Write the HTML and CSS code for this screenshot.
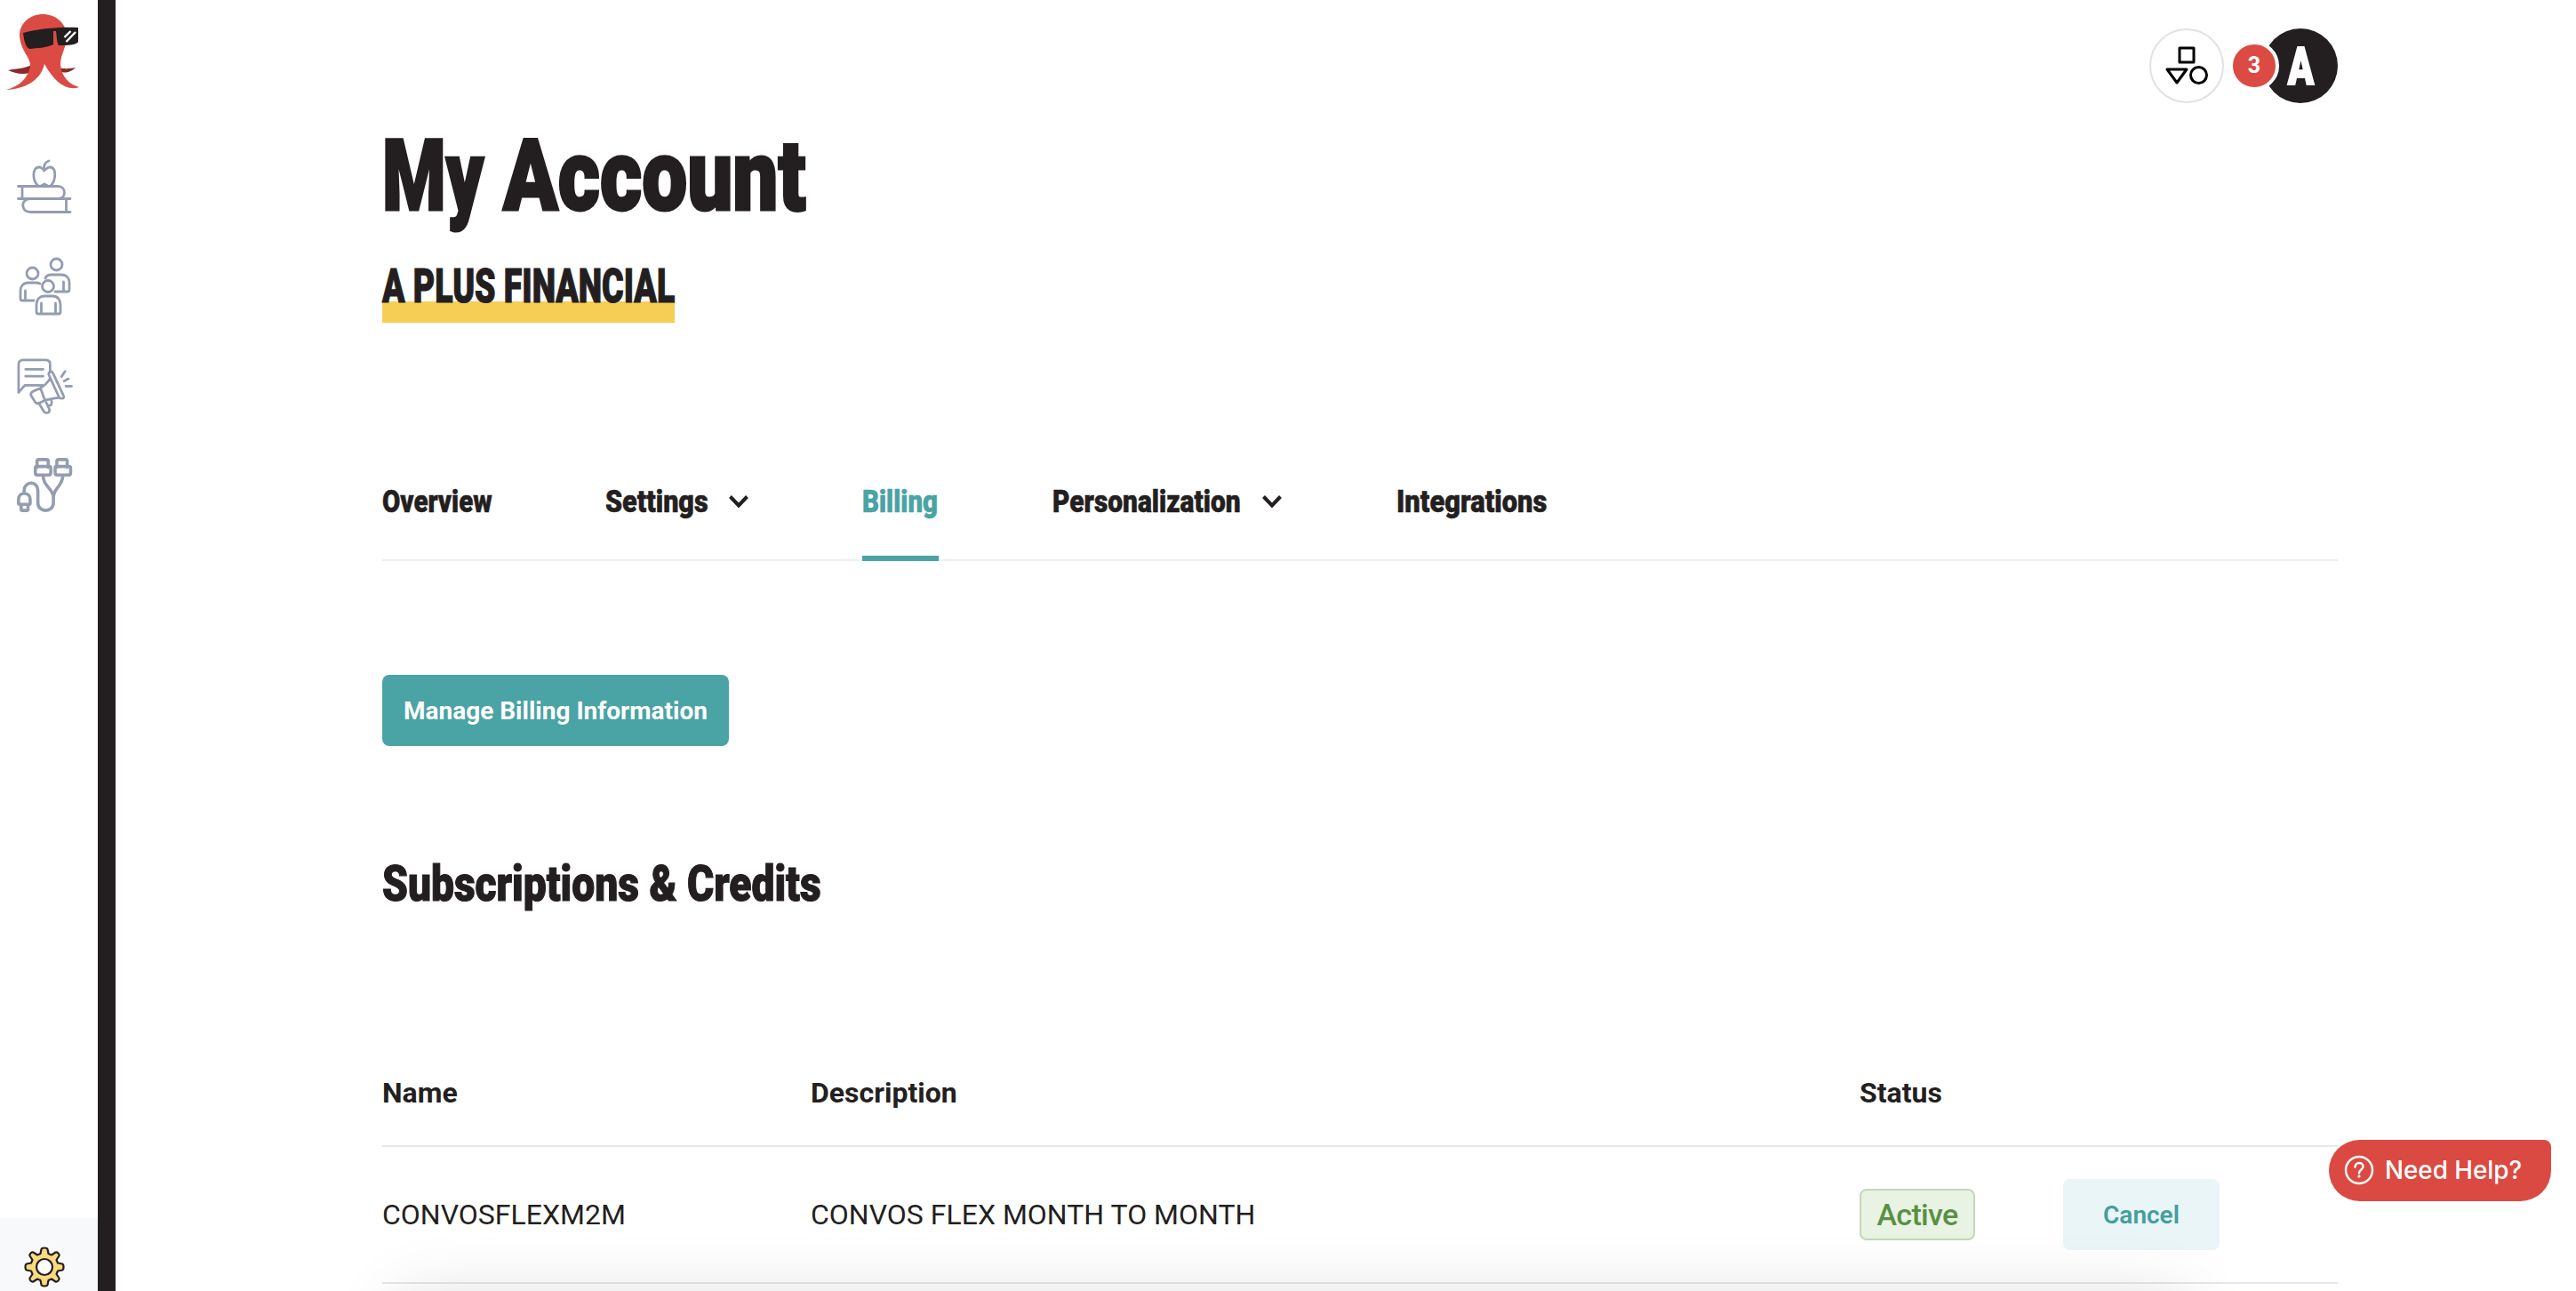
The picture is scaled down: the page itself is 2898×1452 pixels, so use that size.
FILE: index.html
```html
<!DOCTYPE html>
<html lang="en">
<head>
<meta charset="utf-8">
<title>My Account</title>
<link rel="stylesheet" href="styles.css">
</head>
<body>
<div class="app">
  <aside class="sidebar">
    <a class="logo" href="#">
      <svg width="84" height="88" viewBox="0 0 84 88">
        <path fill="#8b2a29" d="M2 63C12 61 22 61 30 56L32 64C22 69 10 67 2 63ZM59 60C66 62 72 61 78 60C72 66 66 66 61 65Z"/>
        <path fill="#db4b43" d="M41 0C56 0 67 10 68 23C69 36 61 44 61 57C62 70 71 79 82 82C68 87 54 76 43 56C39 74 22 84 0 85C15 81 24 72 27 59C28 48 16 42 15 24C15 10 27 0 41 0Z"/>
        <path fill="#231f20" d="M19 21C37 16 60 14 81 15L81 31C79 35 68 35 59 35C57 32 57 27 56 19L53 19L53 34C45 38 35 38 26 39C21 36 20 28 19 21Z"/>
        <path stroke="#fff" stroke-width="2.4" d="M65.500 26L72.500 19M67.500 31L78 20"/>
      </svg>
    </a>
    <nav class="side-nav">
      <a href="#"><svg width="64" height="64" viewBox="0 0 64 64"><path d="M4.500 12.500H49C59 12.500 59 26.500 49 26.500M4.500 26.500H63M9 12.500V26.500M63 41.500H18C7 41.500 7 26.500 18 26.500M58.500 26.500V41.500M27 12C20 6 20 -9 28 -9C31 -9 32 -6 34 -6C36 -6 37 -9 40 -9C48 -9 47 6 41 12M33.500 -5C33 -11 35 -15 39 -16M29.500 12.500L34 10L38.500 12.500" transform="translate(0 21)"/></svg></a>
      <a href="#"><svg width="64" height="64" viewBox="0 1 64 64"><circle cx="47.500" cy="10.500" r="6.500"/><circle cx="20.500" cy="20.500" r="6.500"/><circle cx="38" cy="35" r="6.500"/><path d="M35 26C36 23 39 22 42 22H53C59 22 62 26 62 31V39Q62 41 60 41H46M55.500 30V40M29 32Q27 31 24 31H16C10 31 7 35 7 40V49Q7 51 9 51H22M12.500 40V50M25 63V56C25 49 29 46 34 46H43C49 46 52 50 52 56V64Q52 66 50 66H27Q25 66 25 64M30.500 54V65M46.500 54V65"/></svg></a>
      <a href="#"><svg width="64" height="64" viewBox="0 -2 65 65"><path d="M5 40V8Q5 3 10 3H36Q41 3 41 8V17M5 40L12 32H32M13 13.500H33M13 21.500H33M44 17.500L56 43Q58 47 54 47Q52 47 51 45L40 21Q38 17 42 16Q43 16 44 17.500M41 24C38 29 35 32 30 35L21 39Q18 41 19.500 44L24 51Q26 54 29 52L35 49C41 48 45 46 51 46M30 35L35 49M28 52L34 62Q36 64 39 63Q41 61 40 59L36 50M42 48Q45 55 39 55M54 22L58 16M57 27L62 24.500M59 33H65.500"/></svg></a>
      <a href="#" class="bold"><svg width="62" height="66" viewBox="0.500 0 64 68" preserveAspectRatio="none"><path transform="translate(0 3)" d="M27 11V4Q27 2 29 2H38Q40 2 40 4V11M50 11V4Q50 2 52 2H60Q62 2 62 4V11M26 10H41Q43 10 43 12V17Q43 20 40 20H28Q25 20 25 17V12Q25 10 26 10M49 10H64Q66 10 66 12V17Q66 20 63 20H51Q48 20 48 17V12Q48 10 49 10M34 20C34 33 44 34 46 45M57 20C57 33 47 34 46 45V52C46 64 28 64 28 52V39C28 25 12 27 12 38V40M5.500 53V48C5.500 39 19 39 19 48V53Q19 54 18 54H7Q5.500 54 5.500 53M8.500 54V60Q8.500 61 10 61H15Q16.500 61 16.500 60V54"/></svg></a>
    </nav>
    <a class="settings" href="#">
      <svg width="46" height="46" viewBox="0 0 46 46"><path fill="#f9da80" stroke="#231f20" stroke-width="2.200" stroke-linejoin="round" d="M19.500 3Q20 1.500 23 1.500T26.500 3L27.500 8L31 9.500L35.500 6.500Q37 6 38.500 7.500T39.500 10.500L36.500 15L38 18.500L43 19.500Q44.500 20 44.500 23T43 26.500L38 27.500L36.500 31L39.500 35.500Q40 37 38.500 38.500T35.500 39.500L31 36.500L27.500 38L26.500 43Q26 44.500 23 44.500T19.500 43L18.500 38L15 36.500L10.500 39.500Q9 40 7.500 38.500T6.500 35.500L9.500 31L8 27.500L3 26.500Q1.500 26 1.500 23T3 19.500L8 18.500L9.500 15L6.500 10.500Q6 9 7.500 7.500T10.500 6.500L15 9.500L18.500 8Z"/><circle cx="23" cy="23" r="9" fill="#fff" stroke="#231f20" stroke-width="2.200"/></svg>
    </a>
  </aside>

  <main class="main">
    <header class="topbar">
      <button class="shapes" aria-label="Apps">
        <svg width="48" height="44" viewBox="0 0 48 44"><path d="M16 2H32V18H16ZM2 26H24L13 41Z"/><circle cx="37.500" cy="32.500" r="9"/></svg>
      </button>
      <div class="account"><span class="avatar"><span class="cond">A</span></span><span class="count">3</span></div>
    </header>

    <h1 class="title"><span class="cond first">My </span><span class="cond">Account</span></h1>
    <h2 class="company"><span class="cond">A PLUS FINANCIAL</span></h2>

    <nav class="tabs">
      <a class="tab overview" href="#"><span class="cond">Overview</span></a>
      <a class="tab prefs" href="#"><span class="cond">Settings</span><svg class="chev" width="24" height="16" viewBox="0 0 24 16"><path d="M2.500 2.500L12 12.500L21.500 2.500"/></svg></a>
      <a class="tab billing active" href="#"><span class="cond">Billing</span></a>
      <a class="tab personal" href="#"><span class="cond">Personalization</span><svg class="chev" width="24" height="16" viewBox="0 0 24 16"><path d="M2.500 2.500L12 12.500L21.500 2.500"/></svg></a>
      <a class="tab integr" href="#"><span class="cond">Integrations</span></a>
    </nav>

    <button class="manage">Manage Billing Information</button>

    <h3 class="section"><span class="cond">Subscriptions &amp; Credits</span></h3>

    <div class="table">
      <div class="row head"><div>Name</div><div>Description</div><div>Status</div><div></div></div>
      <div class="row"><div>CONVOSFLEXM2M</div><div>CONVOS FLEX MONTH TO MONTH</div><div><span class="pill">Active</span></div><div><button class="cancel">Cancel</button></div></div>
    </div>
  </main>
</div>
<div class="tray"></div>
<button class="help"><svg width="34" height="34" viewBox="0 0 34 34"><circle cx="17" cy="17" r="15"/><path d="M12.500 13.500C12.500 7.500 21.500 7.500 21.500 13C21.500 16.500 17 16.500 17 20.500"/><circle class="dot" cx="17" cy="24" r="1.600"/></svg><span>Need Help?</span></button>
</body>
</html>
```
FILE: styles.css
```css
* { box-sizing: border-box; }
body { margin: 0; height: 1452px; overflow: hidden; background: #fff; color: #231f20; font-family: Roboto, sans-serif; }
a { color: inherit; text-decoration: none; }
button { border: 0; padding: 0; font: inherit; color: inherit; }
h1, h2, h3 { margin: 0; }
svg { display: block; overflow: visible; flex: none; }

.app { display: flex; height: 1452px; overflow: hidden; }

.sidebar { width: 130px; flex: none; border-right: 20px solid #231f20; display: flex; flex-direction: column; }
.logo { padding: 16px 0 0 7px; height: 176px; }
.side-nav { flex: 1; display: flex; flex-direction: column; gap: 48px; padding-left: 16px; }
.side-nav svg { fill: none; stroke: #949cb0; stroke-width: 2.8; stroke-linecap: round; stroke-linejoin: round; }
.side-nav .bold svg { stroke-width: 3.7; }
.settings { height: 82px; background: #f8f9fb; padding: 32px 0 0 27px; }

.main { flex: 1; padding: 32px 268px 0 300px; }
.topbar { display: flex; justify-content: flex-end; gap: 10px; height: 84px; }
.shapes { width: 84px; height: 84px; border: 2px solid #e1e1e8; border-radius: 50%; background: #fff; display: flex; align-items: center; justify-content: center; }
.shapes svg { fill: none; stroke: #000; stroke-width: 3; stroke-linejoin: round; }
.account { position: relative; width: 118px; display: flex; justify-content: flex-end; }
.avatar { width: 84px; height: 84px; border-radius: 50%; background: #231f20; color: #fff; display: flex; align-items: center; justify-content: center; font-size: 60px; font-weight: 900; }
.count { position: absolute; left: -4px; top: 14px; width: 56px; height: 56px; border: 4px solid #fff; border-radius: 50%; background: #db4b43; color: #fff; font-size: 25px; font-weight: 700; line-height: 48px; text-align: center; }

/* Condensed display lettering */
.cond { display: inline-block; white-space: nowrap; transform-origin: left; -webkit-text-stroke: .6px; }
.avatar .cond { transform: scaleX(.72); transform-origin: center; -webkit-text-stroke: 2px; }

.title { display: flex; height: 174px; padding-top: 16px; font-size: 112px; line-height: 132px; font-weight: 900; }
.title .cond { transform: scaleX(.81); -webkit-text-stroke: 3px; }
.title .first { width: 136px; transform: scaleX(.73); }
.company { width: 329px; height: 73px; line-height: 64px; font-size: 53px; font-weight: 900; background: linear-gradient(#f6ce55, #f6ce55) 0 49px / 100% 24px no-repeat; }
.company .cond { transform: scaleX(.707); -webkit-text-stroke: 1.2px; }

.tabs { display: flex; gap: 128px; height: 128px; margin-top: 140px; border-bottom: 2px solid #efefef; font-size: 35.5px; font-weight: 900; line-height: 42px; }
.tab { height: 128px; padding-top: 40px; display: flex; justify-content: space-between; }
.tab.active { color: #4aa3a4; border-bottom: 6px solid #4aa3a4; }
.chev { margin-top: 13px; fill: none; stroke: #231f20; stroke-width: 4; }
.tab .cond { width: 0; transform: scaleX(.83); }
.overview { width: 123px; }
.prefs { width: 162px; }
.billing { width: 86px; }
.personal { width: 259px; }
.integr { width: 170px; }
.tabs .prefs { margin-right: -1px; }
.tabs .prefs .cond { transform: scaleX(.86); }
.tabs .personal .cond { transform: scaleX(.842); }
.tabs .integr .cond { transform: scaleX(.87); }

.manage { display: block; width: 390px; height: 80px; margin-top: 128px; border-radius: 8px; background: #4aa3a4; color: #fff; font-size: 28px; font-weight: 700; }

.section { margin-top: 121px; height: 69px; line-height: 68px; font-size: 56px; font-weight: 900; }
.section .cond { transform: scaleX(.824); -webkit-text-stroke: 1.2px; }

.table { margin-top: 139px; }
.row { display: grid; grid-template-columns: 482px 1180px 229px 1fr; align-items: center; height: 154px; border-bottom: 2px solid #e6e6ed; font-size: 32px; }
.row.head { height: 122px; font-weight: 700; padding-top: 2px; }
.pill { display: flex; align-items: center; justify-content: center; width: 130px; height: 58px; border: 2px solid #c3d8b8; border-radius: 8px; background: #e8f3e3; color: #5a9044; font-size: 34px; font-weight: 500; letter-spacing: -.7px; }
.cancel { display: block; width: 176px; height: 80px; border-radius: 8px; background: #e9f5f7; color: #459e9d; font-size: 28px; font-weight: 600; }

.tray { position: fixed; left: 449px; right: 439px; top: 1462px; height: 200px; box-shadow: 0 0 80px rgba(0, 0, 0, .14); }
.help { position: fixed; left: 2620px; top: 1282px; width: 250px; height: 69px; border-radius: 35px 8px 35px 35px; background: #db4a42; color: #fff; display: flex; align-items: center; gap: 12px; padding: 0 0 2px 17px; font-family: Inter, sans-serif; font-size: 27.8px; font-weight: 500; }
.help svg { fill: none; stroke: #fff; stroke-width: 2.4; stroke-linecap: round; }
.help .dot { fill: #fff; stroke: none; }
```
